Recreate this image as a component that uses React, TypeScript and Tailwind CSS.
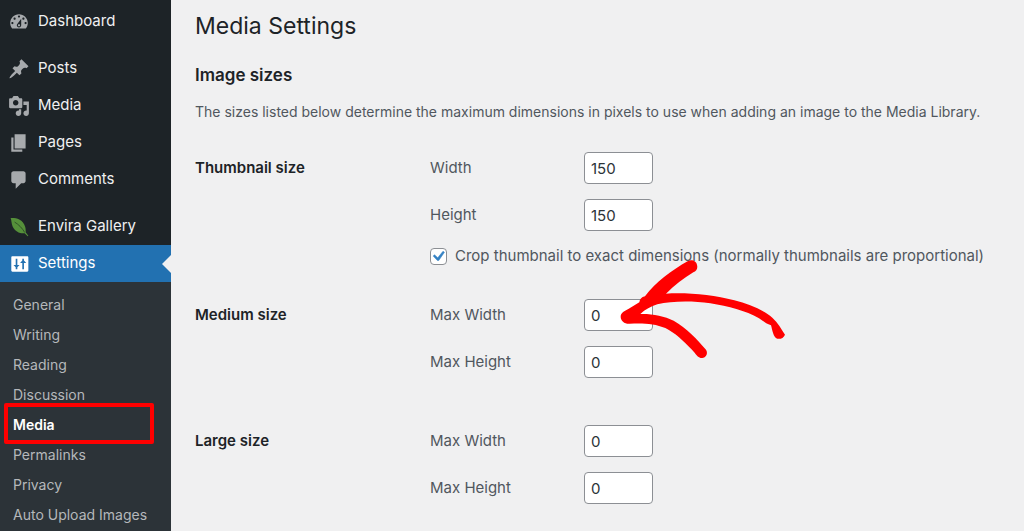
import { useId, useState, type ReactNode } from "react";

const icons = {
  dashboard:
    "M3.76 16h12.48c1.1-1.37 1.76-3.11 1.76-5 0-4.42-3.58-8-8-8s-8 3.58-8 8c0 1.89.66 3.63 1.76 5zM10 4c.55 0 1 .45 1 1s-.45 1-1 1-1-.45-1-1 .45-1 1-1zM6 6c.55 0 1 .45 1 1s-.45 1-1 1-1-.45-1-1 .45-1 1-1zm8 0c.55 0 1 .45 1 1s-.45 1-1 1-1-.45-1-1 .45-1 1-1zm-5.37 5.55L12 7v6c0 1.1-.9 2-2 2s-2-.9-2-2c0-.57.24-1.08.63-1.45zM4 10c.55 0 1 .45 1 1s-.45 1-1 1-1-.45-1-1 .45-1 1-1zm12 0c.55 0 1 .45 1 1s-.45 1-1 1-1-.45-1-1 .45-1 1-1zm-5 3c0-.55-.45-1-1-1s-1 .45-1 1 .45 1 1 1 1-.45 1-1z",
  pin: "M10.44 3.02l1.82-1.82 6.36 6.35-1.83 1.82c-1.05-.68-2.48-.57-3.41.36l-.75.75c-.92.93-1.04 2.35-.35 3.41l-1.83 1.82-2.41-2.41-2.8 2.79c-.42.42-3.38 2.71-3.8 2.29s1.86-3.39 2.28-3.81l2.79-2.79L4.1 9.36l1.83-1.82c1.05.69 2.48.57 3.4-.36l.75-.75c.93-.92 1.05-2.35.36-3.41z",
  media:
    "M13 11V4c0-.55-.45-1-1-1h-1.67L9 1H5L3.67 3H2c-.55 0-1 .45-1 1v7c0 .55.45 1 1 1h10c.55 0 1-.45 1-1zM7 4.5c1.38 0 2.5 1.12 2.5 2.5S8.38 9.5 7 9.5 4.5 8.38 4.5 7 5.62 4.5 7 4.5zM14 6h5v10.5c0 1.38-1.12 2.5-2.5 2.5S14 17.88 14 16.5s1.12-2.5 2.5-2.5c.17 0 .34.02.5.05V9h-3V6zm-4 8.05V13h2v3.5c0 1.38-1.12 2.5-2.5 2.5S7 17.88 7 16.5 8.12 14 9.5 14c.17 0 .34.02.5.05z",
  page: "M6 15V2h10v13H6zm-1 1h8v2H3V5h2v11z",
  comment:
    "M5 2h9c1.1 0 2 .9 2 2v7c0 1.1-.9 2-2 2h-2l-5 5v-5H5c-1.1 0-2-.9-2-2V4c0-1.1.9-2 2-2z",
  settings:
    "M4 3H17.500c.55 0 1 .45 1 1v12c0 .55-.45 1-1 1H4c-.55 0-1-.45-1-1V4c0-.55.45-1 1-1zM7 5.300V10.800H5L7 13V14.800H8.500V13L10.500 10.800H8.500V5.300zM13 14.800V9H11L13 6.900V5.200H14.500V6.900L16.600 9H14.500V14.800z",
};

function Icon({ path }: { path: string }) {
  return (
    <svg viewBox="0 0 20 20" className="size-[22px] shrink-0" fill="currentColor" fillRule="evenodd" aria-hidden="true">
      <path d={path} />
    </svg>
  );
}

function LeafIcon() {
  return (
    <svg viewBox="0 0 20 20" className="size-[22px] shrink-0" aria-hidden="true">
      <path
        d="M2.400 1.900C5.500 1.800 8.200 2.100 10.200 3.200C13 4.600 14.700 7 15.600 9.700C16.200 11.600 16 13.300 16.200 14.900L18.500 17.900L17.900 18.400L15.100 15.700C13.300 15.500 11.600 15.800 9.600 14.900C7.200 13.900 5.200 11.900 4.200 9.600C3.100 7.100 3.300 4.300 2.400 1.900Z"
        fill="#55903a"
      />
      <path d="M6 5.500C9.500 7.600 13 11 15.200 15" stroke="#2b4a26" strokeWidth=".8" fill="none" />
    </svg>
  );
}

function MenuItem({ label, icon, active = false }: { label: string; icon: ReactNode; active?: boolean }) {
  return (
    <li>
      <a
        href="#"
        aria-current={active ? "true" : undefined}
        className={
          active
            ? "relative flex h-[37px] items-center gap-2 bg-[#2271b1] pl-2 text-[15px] text-white"
            : "flex h-[37px] items-center gap-2 pl-2 text-[15px] text-[#f0f0f1]"
        }
      >
        <span className={active ? "text-white" : "text-[#a7aaad]"}>{icon}</span>
        {label}
        {active && (
          <svg viewBox="0 0 9 18" className="absolute right-0 h-[18px] w-[9px]" aria-hidden="true">
            <path d="M9 0V18L0 9Z" fill="#f0f0f1" />
          </svg>
        )}
      </a>
    </li>
  );
}

const submenu = ["General", "Writing", "Reading", "Discussion", "Media", "Permalinks", "Privacy", "Auto Upload Images"];

function Sidebar() {
  return (
    <nav aria-label="Main menu" className="flex w-[171px] shrink-0 flex-col bg-[#1d2327] pt-[3px]">
      <ul>
        <MenuItem label="Dashboard" icon={<Icon path={icons.dashboard} />} />
      </ul>
      <ul className="mt-[10px]">
        <MenuItem label="Posts" icon={<Icon path={icons.pin} />} />
        <MenuItem label="Media" icon={<Icon path={icons.media} />} />
        <MenuItem label="Pages" icon={<Icon path={icons.page} />} />
        <MenuItem label="Comments" icon={<Icon path={icons.comment} />} />
      </ul>
      <ul className="mt-[10px]">
        <MenuItem label="Envira Gallery" icon={<LeafIcon />} />
        <MenuItem label="Settings" icon={<Icon path={icons.settings} />} active />
      </ul>
      <ul className="grow bg-[#2c3338] pt-[7px] text-[14px]">
        {submenu.map((item) =>
          item === "Media" ? (
            <li key={item} className="relative">
              <a href="#" aria-current="page" className="flex h-[30px] items-center pl-[13px] font-semibold text-white">
                {item}
              </a>
              <span className="pointer-events-none absolute -top-[6px] -bottom-[5px] left-1 w-[150px] rounded-[2px] border-4 border-[#ff0000]" />
            </li>
          ) : (
            <li key={item}>
              <a href="#" className="flex h-[30px] items-center pl-[13px] text-[#b5b8bb]">
                {item}
              </a>
            </li>
          ),
        )}
      </ul>
    </nav>
  );
}

function Arrow() {
  return (
    <svg viewBox="0 0 720 450" className="pointer-events-none absolute -top-[59px] -left-[14px] h-[150px] w-[240px]" aria-hidden="true">
      <path
        d="M354 63C365 57 380 64 381 75C384 86 379 93 370 97C340 115 314 135 288 161C353 157 430 165 493 181C538 193 580 210 607 233C624 248 634 267 645 284C641 294 631 298 622 296C610 293 607 270 603 256C589 252 579 242 567 235C527 212 475 199 421 190C365 182 305 183 262 193C243 199 225 209 211 222C247 221 282 228 311 242C350 264 382 299 408 329C415 340 408 353 397 354C382 354 377 340 366 329C340 303 315 278 286 264C254 250 216 249 179 251C164 252 152 243 152 230C152 218 164 213 175 207L208 187C209 179 214 171 225 169C257 126 305 91 354 63Z"
        fill="#ff0000"
      />
    </svg>
  );
}

function SizeField({ label, value, children }: { label: string; value: string; children?: ReactNode }) {
  const id = useId();
  return (
    <div className="mb-[15px] flex items-center">
      <label htmlFor={id} className="w-[154px] shrink-0">
        {label}
      </label>
      <div className="relative">
        <input
          id={id}
          type="text"
          inputMode="numeric"
          defaultValue={value}
          className="block h-8 w-[69px] rounded border border-[#8c8f94] bg-white px-[6px] text-[15px] text-[#2c3338]"
        />
        {children}
      </div>
    </div>
  );
}

function SizeGroup({ title, children }: { title: string; children: ReactNode }) {
  const id = useId();
  return (
    <div role="group" aria-labelledby={id} className="flex">
      <h3 id={id} className="w-[235px] shrink-0 pt-1 leading-[23px] font-semibold text-[#1d2327]">
        {title}
      </h3>
      <div className="grow">{children}</div>
    </div>
  );
}

export default function App() {
  const [crop, setCrop] = useState(true);
  return (
    <div className="flex min-h-screen overflow-hidden bg-[#f0f0f1] font-['Inter','Liberation_Sans',sans-serif] text-[14px] text-[#50575e]">
      <Sidebar />
      <main className="grow pt-2 pl-6">
        <h1 className="text-[23px] leading-9 text-[#1d2327]">Media Settings</h1>
        <h2 className="mt-5 text-[17px] leading-[22px] font-semibold text-[#1d2327]">Image sizes</h2>
        <p className="mt-[15px] leading-[22px]">
          The sizes listed below determine the maximum dimensions in pixels to use when adding an image to the Media
          Library.
        </p>
        <form className="mt-[29px] flex flex-col gap-8 text-[15px]">
          <SizeGroup title="Thumbnail size">
            <SizeField label="Width" value="150" />
            <SizeField label="Height" value="150" />
            <label className="flex h-[21px] items-center gap-2">
              <span className="relative size-[17px] shrink-0">
                <input
                  type="checkbox"
                  checked={crop}
                  onChange={(e) => setCrop(e.target.checked)}
                  className="block size-[17px] appearance-none rounded border border-[#8c8f94] bg-white"
                />
                {crop && (
                  <svg viewBox="0 0 20 20" className="pointer-events-none absolute inset-0 size-[17px]" aria-hidden="true">
                    <path d="M15.300 3.800l1.700 1.200-6.700 9.700H8.700L3.700 9.500l1.600-1.600 3.800 3.600z" fill="#3582c4" stroke="#3582c4" strokeWidth=".6" />
                  </svg>
                )}
              </span>
              Crop thumbnail to exact dimensions (normally thumbnails are proportional)
            </label>
          </SizeGroup>
          <SizeGroup title="Medium size">
            <SizeField label="Max Width" value="0">
              <Arrow />
            </SizeField>
            <SizeField label="Max Height" value="0" />
          </SizeGroup>
          <SizeGroup title="Large size">
            <SizeField label="Max Width" value="0" />
            <SizeField label="Max Height" value="0" />
          </SizeGroup>
        </form>
      </main>
    </div>
  );
}
